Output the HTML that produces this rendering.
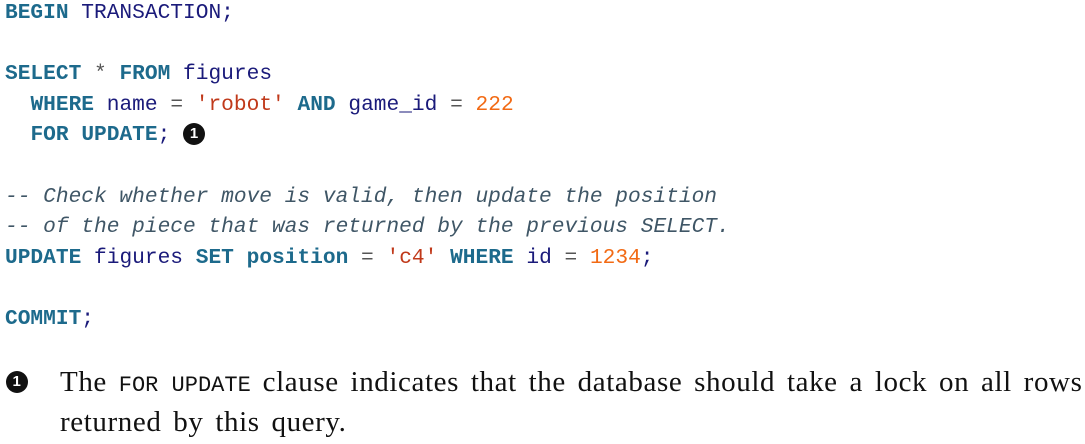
<!DOCTYPE html>
<html><head><meta charset="utf-8"><style>
body{margin:0;width:1085px;height:444px;background:#fff;overflow:hidden;position:relative}
pre{position:absolute;left:5px;top:-2px;margin:0;font-family:"Liberation Mono",monospace;font-size:21.2px;line-height:30.6px;color:#1a1a7a}
.k{color:#1d6a8c;font-weight:bold}.s{color:#c0391a}.n{color:#f26a14}.c{color:#3f5666;font-style:italic}.o{color:#555}
.co{display:inline-block;width:22px;height:22px;border-radius:50%;background:#111;color:#fff;font:bold 15px "Liberation Sans",sans-serif;text-align:center;line-height:22px;vertical-align:2px}
.p{position:absolute;left:60px;top:364px;font-family:"Liberation Serif",serif;font-size:29px;line-height:36px;color:#111;width:1040px;word-spacing:4px;letter-spacing:0.6px}
.p code{font-family:"Liberation Mono",monospace;font-size:22px;letter-spacing:0;word-spacing:0}
.p .co{position:absolute;left:-54px;top:7px}
</style></head><body>
<pre><span class="k">BEGIN</span> TRANSACTION;

<span class="k">SELECT</span> <span class="o">*</span> <span class="k">FROM</span> figures
  <span class="k">WHERE</span> name <span class="o">=</span> <span class="s">'robot'</span> <span class="k">AND</span> game_id <span class="o">=</span> <span class="n">222</span>
  <span class="k">FOR</span> <span class="k">UPDATE</span>; <span class="co">1</span>

<span class="c">-- Check whether move is valid, then update the position</span>
<span class="c">-- of the piece that was returned by the previous SELECT.</span>
<span class="k">UPDATE</span> figures <span class="k">SET</span> <span class="k">position</span> <span class="o">=</span> <span class="s">'c4'</span> <span class="k">WHERE</span> id <span class="o">=</span> <span class="n">1234</span>;

<span class="k">COMMIT</span>;</pre>
<div class="p"><span class="co">1</span>The <code>FOR UPDATE</code> clause indicates that the database should take a lock on all rows<br>returned by this query.</div>
</body></html>
